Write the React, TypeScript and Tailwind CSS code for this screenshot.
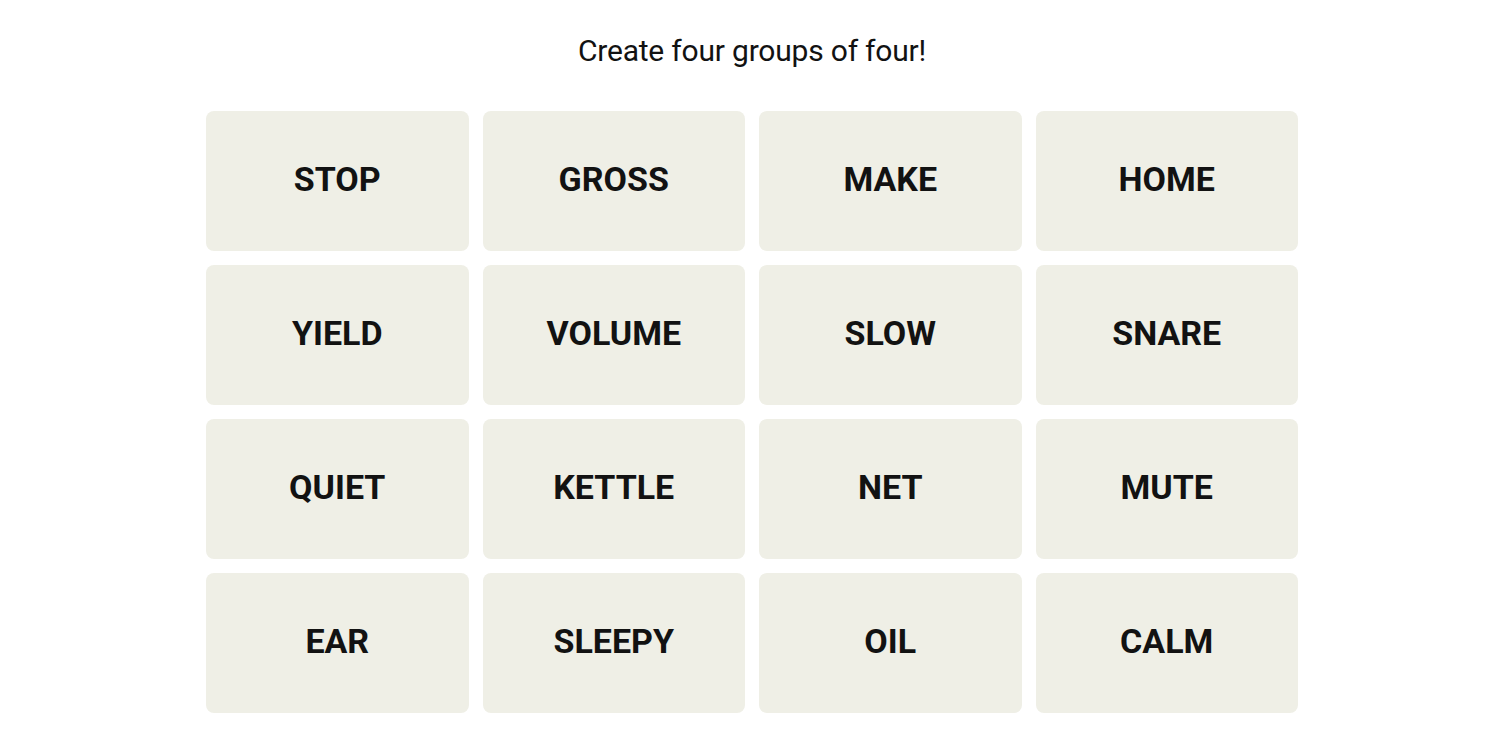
const words = [
  'STOP', 'GROSS', 'MAKE', 'HOME',
  'YIELD', 'VOLUME', 'SLOW', 'SNARE',
  'QUIET', 'KETTLE', 'NET', 'MUTE',
  'EAR', 'SLEEPY', 'OIL', 'CALM',
];

export default function App() {
  return (
    <div className="min-h-screen bg-white pl-[4px] font-['Roboto',sans-serif] text-[#121212]">
      <div className="mx-auto w-[1092px] pt-[31px]">
        <p className="text-center text-[30px] leading-[40px] font-normal tracking-[-0.2px]">Create four groups of four!</p>
        <div className="mt-[40px] grid grid-cols-4 gap-[14px]">
          {words.map(w => (
            <button
              key={w}
              type="button"
              className="h-[140px] rounded-[8px] bg-[#efefe6] pb-[4px] text-[34px] font-bold text-[#121212]"
            >
              {w}
            </button>
          ))}
        </div>
      </div>
    </div>
  );
}
